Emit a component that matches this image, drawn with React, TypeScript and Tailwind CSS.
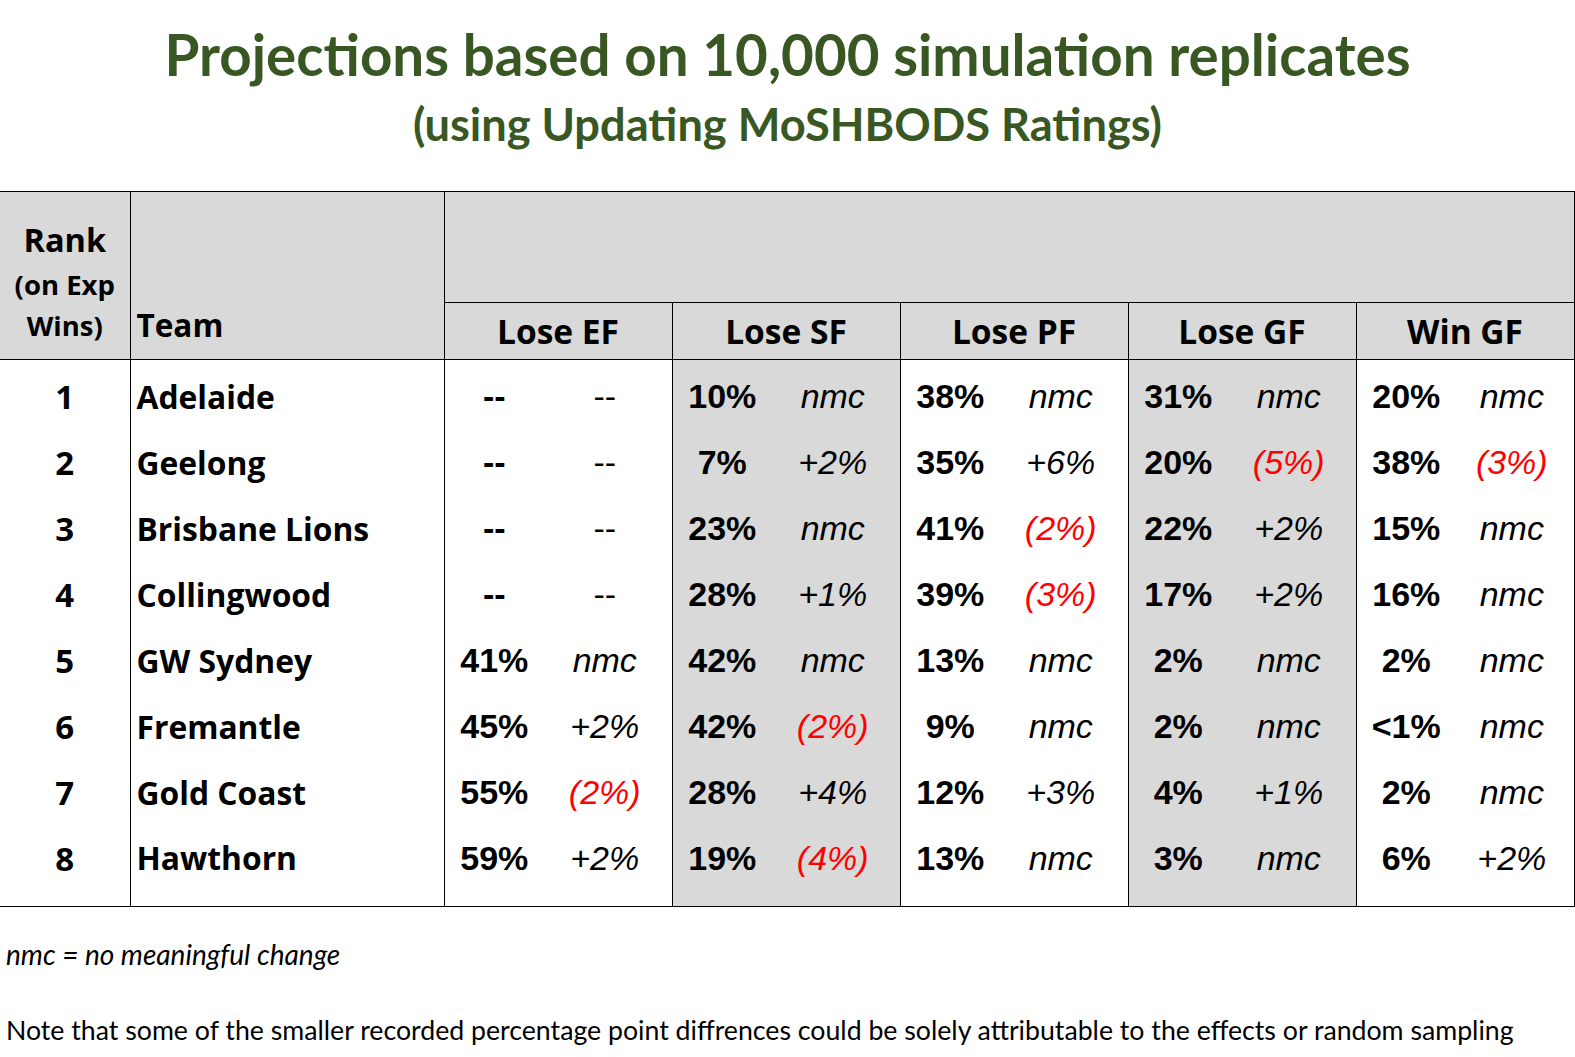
import React from 'react';

// Projection table: each group has the projected percentage and the change since last time
type Cell = [string, string];

const teams: { rank: number; name: string; cells: Cell[] }[] = [
  { rank: 1, name: 'Adelaide', cells: [['--', '--'], ['10%', 'nmc'], ['38%', 'nmc'], ['31%', 'nmc'], ['20%', 'nmc']] },
  { rank: 2, name: 'Geelong', cells: [['--', '--'], ['7%', '+2%'], ['35%', '+6%'], ['20%', '(5%)'], ['38%', '(3%)']] },
  { rank: 3, name: 'Brisbane Lions', cells: [['--', '--'], ['23%', 'nmc'], ['41%', '(2%)'], ['22%', '+2%'], ['15%', 'nmc']] },
  { rank: 4, name: 'Collingwood', cells: [['--', '--'], ['28%', '+1%'], ['39%', '(3%)'], ['17%', '+2%'], ['16%', 'nmc']] },
  { rank: 5, name: 'GW Sydney', cells: [['41%', 'nmc'], ['42%', 'nmc'], ['13%', 'nmc'], ['2%', 'nmc'], ['2%', 'nmc']] },
  { rank: 6, name: 'Fremantle', cells: [['45%', '+2%'], ['42%', '(2%)'], ['9%', 'nmc'], ['2%', 'nmc'], ['<1%', 'nmc']] },
  { rank: 7, name: 'Gold Coast', cells: [['55%', '(2%)'], ['28%', '+4%'], ['12%', '+3%'], ['4%', '+1%'], ['2%', 'nmc']] },
  { rank: 8, name: 'Hawthorn', cells: [['59%', '+2%'], ['19%', '(4%)'], ['13%', 'nmc'], ['3%', 'nmc'], ['6%', '+2%']] },
];

const groups = ['Lose EF', 'Lose SF', 'Lose PF', 'Lose GF', 'Win GF'];

const lato = "font-['Lato',_'Liberation_Sans',_sans-serif]";
const open = "font-['Open_Sans',_'Liberation_Sans',_sans-serif]";
const arial = "font-['Liberation_Sans',_Arial,_sans-serif]";

export default function App() {
  return (
    <div className={`w-[1575px] h-[1057px] bg-white text-black overflow-hidden ${lato}`}>
      <div className="pt-[20px] text-center text-[#385723] font-bold">
        <h1 className="text-[56.5px] leading-[68px]">Projections based on 10,000 simulation replicates</h1>
        <h2 className="text-[45.2px] leading-[56px] mt-[8px]">(using Updating MoSHBODS Ratings)</h2>
      </div>

      <table className="mt-[39px] border-collapse table-fixed w-[1574px]">
        <colgroup>
          <col className="w-[130px]" />
          <col className="w-[314px]" />
          {groups.map((g, i) => (
            <React.Fragment key={g}>
              <col className="w-[100px]" />
              <col className={i === 4 ? 'w-[118px]' : 'w-[128px]'} />
            </React.Fragment>
          ))}
        </colgroup>
        <thead>
          <tr className="h-[111px]">
            <td rowSpan={2} className={`bg-[#d9d9d9] border-t border-r border-b border-black text-center align-bottom pb-[13px] font-bold ${open}`}>
              <div className="text-[32.5px] leading-[48px]">Rank</div>
              <div className="text-[27.5px] leading-[42px]">(on Exp</div>
              <div className="text-[27.5px] leading-[40px]">Wins)</div>
            </td>
            <td rowSpan={2} className={`bg-[#d9d9d9] border border-black align-bottom pb-[13px] pl-[6px] font-bold text-[31.5px] leading-[42px] ${open}`}>
              Team
            </td>
            <td colSpan={10} className="bg-[#d9d9d9] border border-black" />
          </tr>
          <tr className="h-[57px]">
            {groups.map((g) => (
              <td key={g} colSpan={2} className={`bg-[#d9d9d9] border border-black text-center font-bold text-[33.5px] ${open}`}>
                {g}
              </td>
            ))}
          </tr>
        </thead>
        <tbody>
          {teams.map((t, i) => {
            const rowCls = i === 0 ? 'h-[70px] pt-[4px]' : i === 7 ? 'h-[81px] pb-[15px]' : 'h-[66px]';
            const edge = i === 7 ? 'border-b border-black' : '';
            return (
              <tr key={t.rank}>
                <td className={`text-center font-bold text-[33px] ${open} border-r border-black ${rowCls} ${edge}`}>{t.rank}</td>
                <td className={`pl-[6px] font-bold text-[31.8px] ${open} border-r border-black ${rowCls} ${edge}`}>{t.name}</td>
                {t.cells.map(([pct, chg], j) => {
                  const shade = j === 1 || j === 3 ? 'bg-[#d9d9d9]' : 'bg-white';
                  const red = chg.startsWith('(');
                  return (
                    <React.Fragment key={j}>
                      <td className={`text-center font-bold text-[34px] ${arial} ${shade} ${rowCls} ${edge}`}>{pct}</td>
                      <td
                        className={`text-center pr-[6px] text-[34px] ${arial} border-r border-black ${shade} ${rowCls} ${edge} ${
                          chg === '--' ? 'font-normal' : 'italic'
                        } ${red ? 'text-[#ff0000]' : ''}`}
                      >
                        {chg}
                      </td>
                    </React.Fragment>
                  );
                })}
              </tr>
            );
          })}
        </tbody>
      </table>

      <p className="mt-[28px] pl-[6px] italic text-[28px] leading-[38px]">nmc = no meaningful change</p>
      <p className="mt-[38px] pl-[6px] text-[26.7px] leading-[38px] whitespace-nowrap">
        Note that some of the smaller recorded percentage point diffrences could be solely attributable to the effects or random sampling
      </p>
    </div>
  );
}
